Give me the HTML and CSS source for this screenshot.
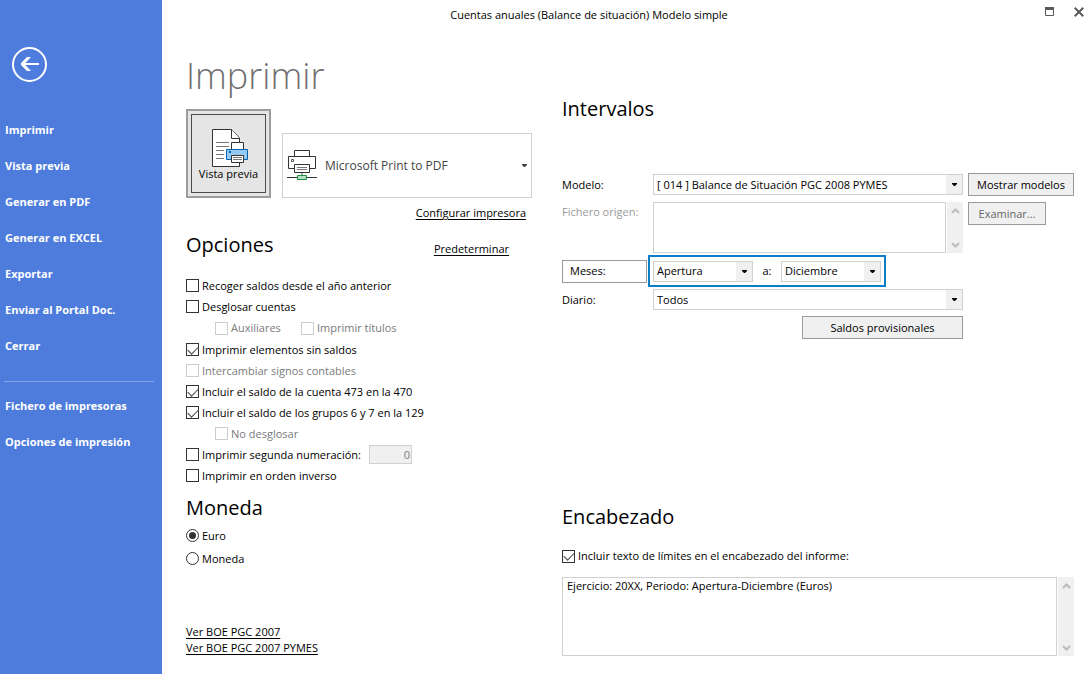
FILE: index.html
```
<!DOCTYPE html>
<html lang="es">
<head>
<meta charset="utf-8">
<title>Cuentas anuales (Balance de situación) Modelo simple</title>
<link rel="stylesheet" href="styles.css">
</head>
<body>
<div class="app">
  <aside class="sidebar">
    <button class="back" type="button" aria-label="Volver">
      <svg width="35" height="35" viewBox="0 0 35 35" fill="none" stroke="#fff">
        <circle cx="17.500" cy="17.500" r="16.500" stroke-width="2"/>
        <path d="M10 17H27" stroke-width="2"/>
        <path d="M19 10H15L9 16V18L15 24H19L12.500 17Z" fill="#fff" stroke="none"/>
      </svg>
    </button>
    <nav class="menu">
      <button type="button">Imprimir</button>
      <button type="button">Vista previa</button>
      <button type="button">Generar en PDF</button>
      <button type="button">Generar en EXCEL</button>
      <button type="button">Exportar</button>
      <button type="button">Enviar al Portal Doc.</button>
      <button type="button">Cerrar</button>
      <hr>
      <button type="button">Fichero de impresoras</button>
      <button type="button">Opciones de impresión</button>
    </nav>
  </aside>

  <div class="window">
    <header class="titlebar">
      <div class="caption">Cuentas anuales (Balance de situación) Modelo simple</div>
      <div class="window-buttons">
        <button type="button" aria-label="Maximizar">
          <svg width="10" height="10" viewBox="0 0 10 10"><path d="M.500 2V8.500H8.500V2" fill="none" stroke="#5a5a5a"/><path d="M0 0H9V3H0Z" fill="#5a5a5a"/></svg>
        </button>
        <button type="button" aria-label="Cerrar ventana">
          <svg width="10" height="10" viewBox="0 0 10 10"><path d="M.700 .700L9.300 9.300M9.300 .700L.700 9.300" stroke="#5a5a5a" stroke-width="2"/></svg>
        </button>
      </div>
    </header>

    <main class="content">
      <div class="left">
        <h1>Imprimir</h1>
        <div class="printer-row">
          <button class="preview" type="button">
            <span class="preview-inner">
              <svg width="40" height="39" viewBox="-3 0 40 39">
                <path d="M.500 .500H19.500L27.500 9V37.500H.500Z" fill="#fff" stroke="#333"/>
                <path d="M19.500 .500V9.500H27.500" fill="#fff" stroke="#333"/>
                <path d="M4 13.500H17M4 17.500H17M4 21.500H12M4 25.500H12M4 29.500H12" stroke="#777"/>
                <path d="M19.500 20.500V13.500H31.500V20.500" fill="#fff" stroke="#333"/>
                <path d="M14.500 20.500H35.500V30.500H14.500Z" fill="#93c9f2" stroke="#0063b1"/>
                <path d="M17 22H19V24H17Z" fill="#0063b1"/>
                <path d="M19.500 26.500H31.500V33.500H19.500Z" fill="#fff" stroke="#333"/>
                <path d="M21 28.500H30M21 30.500H30" stroke="#777"/>
              </svg>
              <span>Vista previa</span>
            </span>
          </button>
          <button class="printer" type="button">
            <svg width="30" height="31" viewBox="0 0 30 31">
              <path d="M7.500 7V.500H22.500V7" fill="#fff" stroke="#333"/>
              <path d="M7 18.500H1.500V6.500H28.500V18.500H23" fill="#fff" stroke="#333"/>
              <path d="M4.500 9.500H6.500V11.500H4.500Z" fill="#fff" stroke="#555"/>
              <path d="M7.500 14.500H22.500V22.500H7.500Z" fill="#fff" stroke="#333"/>
              <path d="M10 17.500H20M10 19.500H20" stroke="#777"/>
              <path d="M15 23V26" stroke="#aaa" stroke-width="2"/>
              <path d="M0 27.500H30" stroke="#333"/>
              <path d="M10.500 25.500H19.500V29.500H10.500Z" fill="#b5ddc0" stroke="#1a9040"/>
            </svg>
            <span class="printer-name">Microsoft Print to PDF</span>
            <svg width="5" height="3" viewBox="0 0 5 3"><path d="M0 0H5V1L3 3H2L0 1Z" fill="#444"/></svg>
          </button>
        </div>
        <div class="configure"><a href="#configurar">Configurar impresora</a></div>

        <div class="section-head">
          <h2>Opciones</h2>
          <a href="#predeterminar">Predeterminar</a>
        </div>
        <div class="options">
          <div class="row"><label><input type="checkbox">Recoger saldos desde el año anterior</label></div>
          <div class="row"><label><input type="checkbox">Desglosar cuentas</label></div>
          <div class="row nested details">
            <label class="disabled aux"><input type="checkbox" disabled>Auxiliares</label>
            <label class="disabled"><input type="checkbox" disabled>Imprimir títulos</label>
          </div>
          <div class="row"><label><input type="checkbox" checked>Imprimir elementos sin saldos</label></div>
          <div class="row"><label class="disabled"><input type="checkbox" disabled>Intercambiar signos contables</label></div>
          <div class="row"><label><input type="checkbox" checked>Incluir el saldo de la cuenta 473 en la 470</label></div>
          <div class="row"><label><input type="checkbox" checked>Incluir el saldo de los grupos 6 y 7 en la 129</label></div>
          <div class="row nested"><label class="disabled"><input type="checkbox" disabled>No desglosar</label></div>
          <div class="row">
            <label class="second"><input type="checkbox">Imprimir segunda numeración:</label>
            <input class="number" type="text" value="0" aria-label="Segunda numeración" disabled>
          </div>
          <div class="row"><label><input type="checkbox">Imprimir en orden inverso</label></div>
        </div>

        <h2 class="currency-title">Moneda</h2>
        <div class="currency">
          <label><input type="radio" name="moneda" checked>Euro</label>
          <label><input type="radio" name="moneda">Moneda</label>
        </div>
        <div class="links">
          <a href="#boe">Ver BOE PGC 2007</a>
          <a href="#boe-pymes">Ver BOE PGC 2007 PYMES</a>
        </div>
      </div>

      <div class="right">
        <h2>Intervalos</h2>
        <div class="fields">
          <label for="modelo">Modelo:</label>
          <div class="select">
            <select id="modelo"><option>[ 014 ] Balance de Situación PGC 2008 PYMES</option></select>
            <span class="arrow"><svg width="5" height="3" viewBox="0 0 5 3"><path d="M0 0H5V1L3 3H2L0 1Z"/></svg></span>
          </div>
          <button class="btn" type="button">Mostrar modelos</button>

          <label class="origin-label" for="origen">Fichero origen:</label>
          <div class="memo origin">
            <textarea id="origen" disabled></textarea>
            <div class="scroll">
              <svg width="9" height="6" viewBox="0 0 9 6"><path d="M1 5L4.500 1.500L8 5"/></svg>
              <svg width="9" height="6" viewBox="0 0 9 6"><path d="M1 1L4.500 4.500L8 1"/></svg>
            </div>
          </div>
          <button class="btn browse" type="button" disabled>Examinar...</button>

          <button class="btn months" type="button">Meses:</button>
          <div class="period">
            <div class="select">
              <select aria-label="Mes inicial"><option>Apertura</option></select>
              <span class="arrow"><svg width="5" height="3" viewBox="0 0 5 3"><path d="M0 0H5V1L3 3H2L0 1Z"/></svg></span>
            </div>
            <span class="to">a:</span>
            <div class="select">
              <select aria-label="Mes final"><option>Diciembre</option></select>
              <span class="arrow"><svg width="5" height="3" viewBox="0 0 5 3"><path d="M0 0H5V1L3 3H2L0 1Z"/></svg></span>
            </div>
          </div>

          <label class="first" for="diario">Diario:</label>
          <div class="select">
            <select id="diario"><option>Todos</option></select>
            <span class="arrow"><svg width="5" height="3" viewBox="0 0 5 3"><path d="M0 0H5V1L3 3H2L0 1Z"/></svg></span>
          </div>
          <button class="btn provisional" type="button">Saldos provisionales</button>
        </div>

        <div class="heading-block">
          <h2>Encabezado</h2>
          <label class="include"><input type="checkbox" checked>Incluir texto de límites en el encabezado del informe:</label>
          <div class="memo header-memo">
            <textarea aria-label="Texto del encabezado">Ejercicio: 20XX, Periodo: Apertura-Diciembre (Euros)</textarea>
            <div class="scroll">
              <svg width="9" height="6" viewBox="0 0 9 6"><path d="M1 5L4.500 1.500L8 5"/></svg>
              <svg width="9" height="6" viewBox="0 0 9 6"><path d="M1 1L4.500 4.500L8 1"/></svg>
            </div>
          </div>
        </div>
      </div>
    </main>
  </div>
</div>
</body>
</html>
```
FILE: styles.css
```
* { box-sizing: border-box; }
body {
  margin: 0;
  background: #fff;
  color: #000;
  font: 11px/16px "Open Sans", "Noto Sans", sans-serif;
}
button, input, select, textarea { font: inherit; color: inherit; margin: 0; border-radius: 0; }
h1, h2 { margin: 0; font-weight: 400; }
h1 { font-size: 36px; font-weight: 300; line-height: 52px; color: #707070; }
h2 { font-size: 20px; line-height: 28px; }
a { color: #000; text-decoration: underline; text-underline-offset: 2px; }
svg { display: block; flex: none; }

.app { display: grid; grid-template-columns: 162px minmax(0, 1fr); min-height: 100vh; }

.sidebar { background: #4e7cdc; padding-top: 47px; }
.back { display: block; margin: 0 0 30px 12px; padding: 0; border: 0; background: none; }
.menu { display: flex; flex-direction: column; padding: 0 8px 0 4px; }
.menu button {
  height: 36px; padding: 0 1px; border: 0; background: none;
  color: #fff; font-weight: 700; text-align: left; white-space: nowrap;
}
.menu hr { width: 100%; height: 1px; margin: 17px 0 6px; border: 0; background: #86a6e9; }

.window { display: flex; flex-direction: column; }
.titlebar { display: flex; height: 30px; }
.caption { flex: 1; line-height: 30px; text-align: center; }
.window-buttons { display: flex; align-items: flex-start; justify-content: flex-end; gap: 19px; width: 76px; padding: 7px 8px 0 0; }
.window-buttons button { padding: 0; border: 0; background: none; }

.content {
  flex: 1; display: grid;
  grid-template-columns: minmax(0, 346fr) minmax(0, 512fr);
  gap: 30px; padding: 20px 18px 18px 24px;
}
.left, .right { display: flex; flex-direction: column; }

.printer-row { display: flex; align-items: flex-end; gap: 11px; margin-top: 7px; }
.preview { width: 85px; height: 89px; padding: 3px; border: 2px solid #9d9d9d; background: #e5e5e5; }
.preview-inner {
  display: flex; flex-direction: column; align-items: center; justify-content: flex-end;
  height: 100%; padding-bottom: 12px; border: 1px solid #4c4c4c; line-height: 12px; white-space: nowrap;
}
.printer {
  flex: 1; display: flex; align-items: center; height: 65px; padding: 0 4px;
  border: 1px solid #d0d0d0; background: #fff; color: #444; font-size: 12px; text-align: left;
}
.printer-name { flex: 1; padding-left: 8px; }
.configure { margin-top: 7px; padding-right: 6px; text-align: right; }

.section-head { display: flex; justify-content: space-between; align-items: flex-end; margin-top: 10px; padding-right: 23px; }
.section-head a { margin-bottom: 2px; }
.options { margin-top: 16px; }
.row { display: flex; align-items: center; height: 21px; }
.row.nested { padding-left: 29px; }
.row.details { height: 22px; }
label { display: flex; align-items: center; gap: 3px; white-space: nowrap; }
.disabled { color: #7a7a7a; }
.aux { width: 86px; }
.second { width: 183px; }
.number { width: 43px; height: 19px; padding: 0 1px; border: 1px solid #d0d0d0; background: #f0f0f0; color: #7a7a7a; text-align: right; }

input[type="checkbox"], input[type="radio"] {
  appearance: none; display: grid; place-items: center; flex: none;
  width: 13px; height: 13px; border: 1px solid #333; background: #fff;
}
input[type="checkbox"]:disabled { border-color: #ccc; }
input[type="checkbox"]:checked::before {
  content: ""; width: 9px; height: 5px; margin-bottom: 2px;
  border: solid #444; border-width: 0 0 1px 1px; transform: rotate(-45deg);
}
input[type="radio"] { border-radius: 50%; }
input[type="radio"]:checked::before { content: ""; width: 7px; height: 7px; border-radius: 50%; background: #333; }

.currency-title { margin-top: 8px; }
.currency { margin-top: 2px; }
.currency label { height: 23px; }
.links { display: flex; flex-direction: column; align-items: flex-start; margin-top: 54px; }

.right h2 { margin-top: 45px; }
.fields {
  display: grid; grid-template-columns: 86px minmax(0, 1fr) 106px;
  column-gap: 5px; row-gap: 2px; align-items: center; margin-top: 50px;
}
.first { grid-column: 1; }
.origin-label { align-self: start; margin-top: 6px; color: #9a9a9a; }
.select { display: grid; grid-template-columns: minmax(0, 1fr) 17px; height: 21px; }
.select select {
  grid-area: 1 / 1 / 2 / 3; width: 100%; height: 100%; padding: 0 18px 0 3px;
  appearance: none; border: 1px solid #d0d0d0; background: #fff;
}
.arrow { grid-area: 1 / 2; display: grid; place-items: center; margin: 1px 1px 1px 0; background: #f0f0f0; pointer-events: none; }
.btn { height: 23px; padding: 0 8px; border: 1px solid #9a9a9a; background: #f0f0f0; white-space: nowrap; }
.months { width: 85px; padding-left: 7px; background: #fff; text-align: left; }
.browse { align-self: start; justify-self: start; width: 78px; margin-top: 4px; color: #666; }
.memo { display: grid; grid-template-columns: minmax(0, 1fr) 16px; gap: 1px; }
.memo textarea { height: 100%; padding: 0 4px; border: 1px solid #d0d0d0; background: #fff; resize: none; overflow: hidden; }
.origin { height: 51px; margin-top: 4px; }
.header-memo { height: 79px; margin-top: 13px; }
.scroll { display: flex; flex-direction: column; justify-content: space-between; align-items: center; padding: 6px 0 5px; background: #f0f0f0; }
.scroll path { fill: none; stroke: #bbb; stroke-width: 2; }
.period {
  display: grid; grid-template-columns: 100px 28px 100px; align-items: center; justify-self: start;
  height: 32px; margin-left: -5px; padding: 0 3px; border: 2px solid #0a7fc8;
}
.to { text-align: center; }
.provisional { grid-column: 2; justify-self: end; width: 161px; margin-top: 4px; }
.heading-block { margin-top: auto; }
.heading-block h2 { margin: 0; }
.include { height: 16px; margin-top: 17px; }
```
